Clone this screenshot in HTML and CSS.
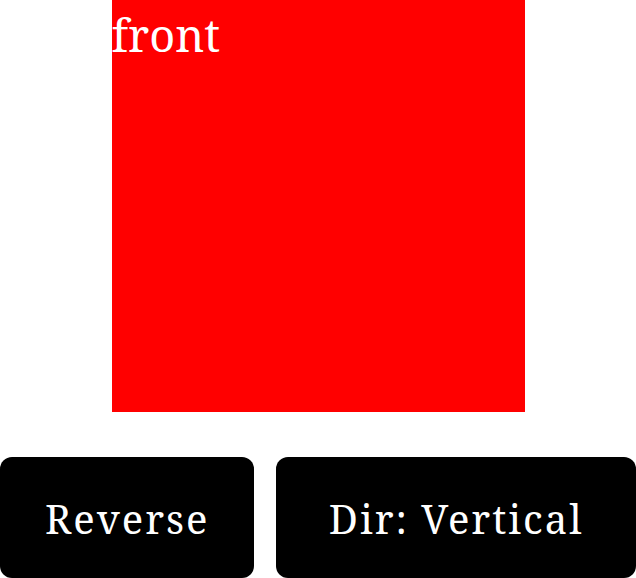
FILE: index.html
```html
<!DOCTYPE html>
<html lang="en">
<head>
    <meta charset="UTF-8">
    <meta name="viewport" content="width=device-width, initial-scale=1.0">
    <title>Flip Card</title>
    <link rel="stylesheet" href="styles.css">
</head>
<body>
    <div class="stage">
        <div class="card">
            <div class="face front">front</div>
        </div>
    </div>
    <div class="controls">
        <button class="btn btn-reverse">Reverse</button>
        <button class="btn btn-dir">Dir: Vertical</button>
    </div>
</body>
</html>
```

FILE: styles.css
```css
/* Base */
body {
    margin: 0;
    background-color: #fff;
    font-family: "Noto Serif", "DejaVu Serif", serif;
}

.stage {
    display: flex;
    justify-content: center;
}

.card {
    width: 413px;
    height: 412px;
}

.face {
    width: 100%;
    height: 100%;
    background-color: #f00;
    color: #fff;
    font-size: 45px;
    line-height: 1.55;
}

/* Buttons */
.controls {
    display: flex;
    gap: 22px;
    margin-top: 45px;
}

.btn {
    background-color: #000;
    color: #fff;
    border: none;
    border-radius: 12px;
    font-family: inherit;
    font-size: 40px;
    letter-spacing: 2px;
    padding: 34px 45px 32px;
}

.btn-dir {
    flex: 1;
}
```
